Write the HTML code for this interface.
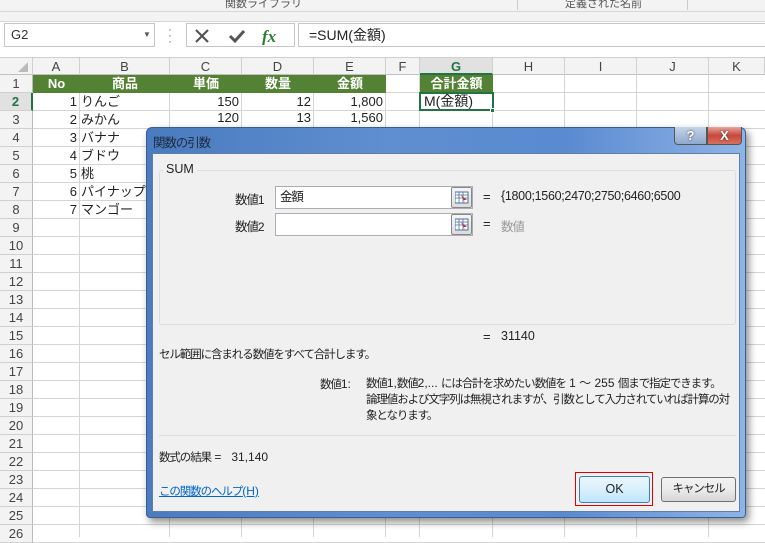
<!DOCTYPE html>
<html><head><meta charset="utf-8"><style>
*{margin:0;padding:0;box-sizing:border-box}
body{width:765px;height:537px;overflow:hidden;background:#fff;font-family:"Liberation Sans","Noto Sans CJK JP",sans-serif;font-size:13px;color:#222;position:relative}
.a{position:absolute;white-space:nowrap}
.gl{position:absolute;background:#d4d4d4}
.ch{position:absolute;top:58px;height:17px;text-align:center;font-size:13px;color:#444;line-height:17px;background:#f3f3f3;border-right:1px solid #d0d0d0;border-bottom:1px solid #c0c0c0}
.rh{position:absolute;left:0;width:33px;height:18px;text-align:center;font-size:13px;color:#444;line-height:18px;background:#f3f3f3;border-bottom:1px solid #d0d0d0;border-right:1px solid #bbb}
.hd{position:absolute;top:75px;height:18px;background:#548235;color:#fff;font-weight:bold;text-align:center;line-height:18px;font-size:13px}
.c{position:absolute;height:18px;line-height:18px;font-size:13px}
.r{text-align:right}
.ib{position:absolute;background:#fff;border:1px solid #abadb3}
.rb{position:absolute;width:21px;height:21px;border:1px solid #888;border-radius:2px;background:linear-gradient(#f6f6f6,#dcdcdc)}
.n{font-size:11.5px;letter-spacing:-1.1px}
.n b{font-weight:normal;letter-spacing:0;font-size:12px}
</style></head><body>
<div class="a" style="left:0;top:0;width:765px;height:12px;background:#f3f3f3;border-bottom:1px solid #d6d6d6"></div>
<div class="a" style="left:225px;top:-5px;font-size:11px;color:#555">関数ライブラリ</div>
<div class="a" style="left:517px;top:0;width:1px;height:10px;background:#ccc"></div>
<div class="a" style="left:687px;top:0;width:1px;height:10px;background:#ccc"></div>
<div class="a" style="left:565px;top:-5px;font-size:11px;color:#555">定義された名前</div>
<div class="a" style="left:0;top:13px;width:765px;height:45px;background:#fff;border-bottom:1px solid #d0d0d0"></div>
<div class="a" style="left:0;top:12px;width:765px;height:10px;background:#f3f3f3;border-bottom:1px solid #d6d6d6"></div>
<div class="a" style="left:4px;top:23px;width:151px;height:24px;border:1px solid #c6c6c6;background:#fff;padding-left:6px;line-height:22px;font-size:13px;color:#333">G2<span style="position:absolute;left:138px;top:0;font-size:8px;color:#555">▼</span></div>
<div class="a" style="left:168px;top:26px;font-size:12px;color:#777;line-height:6px">·<br>·<br>·</div>
<div class="a" style="left:186px;top:23px;width:109px;height:24px;border:1px solid #c6c6c6;background:#fff"></div>
<svg class="a" style="left:192px;top:27px" width="100" height="18"><path d="M4 3L16 15M16 3L4 15" stroke="#555" stroke-width="2.2"/><path d="M38 9l5 5 9-10" stroke="#555" stroke-width="3" fill="none"/><text x="70" y="15" font-family="Liberation Serif,serif" font-style="italic" font-weight="bold" font-size="17" fill="#2e7d32">fx</text></svg>
<div class="a" style="left:298px;top:23px;width:467px;height:24px;border:1px solid #c6c6c6;border-right:none;background:#fff;padding-left:10px;line-height:22px;font-size:14px">=SUM(金額)</div>
<div class="ch" style="left:0;width:33px"><svg width="33" height="17"><path d="M28 4L28 14L18 14Z" fill="#bbb"/></svg></div>
<div class="ch" style="left:33px;width:47px">A</div>
<div class="ch" style="left:80px;width:90px">B</div>
<div class="ch" style="left:170px;width:72px">C</div>
<div class="ch" style="left:242px;width:72px">D</div>
<div class="ch" style="left:314px;width:72px">E</div>
<div class="ch" style="left:386px;width:34px">F</div>
<div class="ch" style="left:420px;width:73px;background:#e1e1e1;color:#217346;font-weight:bold;border-bottom:2px solid #217346">G</div>
<div class="ch" style="left:493px;width:72px">H</div>
<div class="ch" style="left:565px;width:72px">I</div>
<div class="ch" style="left:637px;width:72px">J</div>
<div class="ch" style="left:709px;width:56px">K</div>
<div id="grid"></div>
<div class="gl" style="left:79px;top:75px;width:1px;height:462px"></div>
<div class="gl" style="left:169px;top:75px;width:1px;height:462px"></div>
<div class="gl" style="left:241px;top:75px;width:1px;height:462px"></div>
<div class="gl" style="left:313px;top:75px;width:1px;height:462px"></div>
<div class="gl" style="left:385px;top:75px;width:1px;height:462px"></div>
<div class="gl" style="left:419px;top:75px;width:1px;height:462px"></div>
<div class="gl" style="left:492px;top:75px;width:1px;height:462px"></div>
<div class="gl" style="left:564px;top:75px;width:1px;height:462px"></div>
<div class="gl" style="left:636px;top:75px;width:1px;height:462px"></div>
<div class="gl" style="left:708px;top:75px;width:1px;height:462px"></div>
<script>
var g='';for(var i=1;i<=26;i++){var t=75+(i-1)*18;g+='<div class="gl" style="left:33px;top:'+(t+17)+'px;width:732px;height:1px"></div><div class="rh" style="top:'+t+'px'+(i==2?';background:#e1e1e1;color:#217346;font-weight:bold;border-right:2px solid #217346':'')+'">'+i+'</div>';}
document.getElementById('grid').innerHTML=g;
</script>
<div class="hd" style="left:33px;width:47px">No</div>
<div class="hd" style="left:80px;width:90px">商品</div>
<div class="hd" style="left:170px;width:72px">単価</div>
<div class="hd" style="left:242px;width:72px">数量</div>
<div class="hd" style="left:314px;width:72px">金額</div>
<div class="hd" style="left:420px;width:73px">合計金額</div>
<div class="c r" style="left:33px;top:93px;width:44px">1</div><div class="c" style="left:81px;top:93px">りんご</div>
<div class="c r" style="left:170px;top:93px;width:69px">150</div><div class="c r" style="left:242px;top:93px;width:69px">12</div><div class="c r" style="left:314px;top:93px;width:69px">1,800</div>
<div class="c r" style="left:33px;top:111px;width:44px">2</div><div class="c" style="left:81px;top:111px">みかん</div>
<div class="c r" style="left:170px;top:109px;width:69px">120</div><div class="c r" style="left:242px;top:109px;width:69px">13</div><div class="c r" style="left:314px;top:109px;width:69px">1,560</div>
<div class="c r" style="left:33px;top:129px;width:44px">3</div><div class="c" style="left:81px;top:129px">バナナ</div>
<div class="c r" style="left:33px;top:147px;width:44px">4</div><div class="c" style="left:81px;top:147px">ブドウ</div>
<div class="c r" style="left:33px;top:165px;width:44px">5</div><div class="c" style="left:81px;top:165px">桃</div>
<div class="c r" style="left:33px;top:183px;width:44px">6</div><div class="c" style="left:81px;top:183px">パイナップル</div>
<div class="c r" style="left:33px;top:201px;width:44px">7</div><div class="c" style="left:81px;top:201px">マンゴー</div>
<div class="a" style="left:419px;top:92px;width:75px;height:19px;border:2px solid #217346;background:#fff;padding-left:3px;line-height:15px;font-size:14px">M(金額)</div>
<div class="a" style="left:490px;top:108px;width:5px;height:5px;background:#217346;border:1px solid #fff"></div>
<!-- dialog -->
<div class="a" style="left:146px;top:127px;width:600px;height:391px;border:1px solid #3a5f8f;border-radius:6px 6px 4px 4px;background:linear-gradient(90deg,#4a7bbf 0%,#5f8fd0 40%,#5a8ad0 70%,#8fb4e6 100%);box-shadow:3px 4px 8px rgba(0,0,0,.45)"></div>
<div class="a n" style="left:153px;top:132px;font-size:12.5px;color:#1c2a3c">関数の引数</div>
<div class="a" style="left:674px;top:127px;width:33px;height:18px;border:1px solid #555;border-top:none;border-radius:0 0 0 4px;background:linear-gradient(#c4d4ea,#8fa8cc);text-align:center;color:#fff;font-weight:bold;font-size:13px;line-height:17px;text-shadow:0 0 2px #333">?</div>
<div class="a" style="left:707px;top:127px;width:35px;height:18px;border:1px solid #555;border-top:none;border-radius:0 0 4px 0;background:linear-gradient(#e8a59b,#c9463a 50%,#d8705f);text-align:center;color:#fff;font-weight:bold;font-size:13px;line-height:17px;text-shadow:0 0 2px #333">X</div>
<div class="a" style="left:152px;top:153px;width:588px;height:359px;background:#f0f0f0;border:1px solid #5f7fa8"></div>
<div class="a" style="left:159px;top:170px;width:577px;height:155px;border:1px solid #d5dfe5;border-radius:3px"></div>
<div class="a" style="left:163px;top:162px;background:#f0f0f0;padding:0 3px;font-size:12.5px">SUM</div>
<div class="a n" style="left:235px;top:189px;font-size:12.5px">数値<b>1</b></div>
<div class="ib n" style="left:275px;top:186px;width:198px;height:23px;padding-left:4px;line-height:21px;font-size:12.5px">金額</div>
<div class="rb" style="left:451px;top:187px"></div>
<div class="a" style="left:483px;top:189px">=</div>
<div class="a" style="left:501px;top:189px;width:199px;overflow:hidden;font-size:12.5px;letter-spacing:-0.3px">{1800;1560;2470;2750;6460;6500</div>
<div class="a n" style="left:235px;top:216px;font-size:12.5px">数値<b>2</b></div>
<div class="ib" style="left:275px;top:213px;width:198px;height:23px"></div>
<div class="rb" style="left:451px;top:214px"></div>
<div class="a" style="left:483px;top:216px">=</div>
<div class="a n" style="left:501px;top:216px;color:#999;font-size:12.5px">数値</div>
<svg class="a" style="left:455px;top:191px" width="14" height="14"><rect x="0" y="1" width="13" height="11" fill="#fff" stroke="#4a6fa5"/><path d="M0 4H13M0 7H13M4 1V12M8 1V12" stroke="#4a6fa5" stroke-width=".8"/><path d="M6 4l6 5-3 0 1 3z" fill="#c0392b"/></svg>
<svg class="a" style="left:455px;top:218px" width="14" height="14"><rect x="0" y="1" width="13" height="11" fill="#fff" stroke="#4a6fa5"/><path d="M0 4H13M0 7H13M4 1V12M8 1V12" stroke="#4a6fa5" stroke-width=".8"/><path d="M6 4l6 5-3 0 1 3z" fill="#c0392b"/></svg>
<div class="a" style="left:483px;top:329px">=</div>
<div class="a" style="left:501px;top:329px;font-size:12.5px">31140</div>
<div class="a n" style="left:159px;top:346px">セル範囲に含まれる数値をすべて合計します。</div>
<div class="a n" style="left:320px;top:376px">数値<b>1:</b></div>
<div class="a n" style="left:366px;top:375px;line-height:16px">数値<b>1,</b>数値<b>2,... </b>には合計を求めたい数値を<b> 1 ～ 255 </b>個まで指定できます。<br>論理値および文字列は無視されますが、引数として入力されていれば計算の対<br>象となります。</div>
<div class="a" style="left:159px;top:435px;width:577px;height:1px;background:#d5dfe5"></div>
<div class="a n" style="left:159px;top:449px">数式の結果<b> =&nbsp;&nbsp; 31,140</b></div>
<div class="a n" style="left:159px;top:483px;color:#0066cc;text-decoration:underline">この関数のヘルプ<b>(H)</b></div>
<div class="a" style="left:575px;top:472px;width:78px;height:34px;border:1px solid #e00000"></div>
<div class="a" style="left:579px;top:476px;width:71px;height:27px;border:1px solid #3c7fb1;border-radius:3px;background:linear-gradient(#eaf6fd,#d9f0fc 50%,#bee6fd);text-align:center;line-height:25px;font-size:12.5px">OK</div>
<div class="a n" style="left:661px;top:477px;width:75px;height:25px;border:1px solid #707070;border-radius:3px;background:linear-gradient(#f2f2f2,#ebebeb 50%,#d6d6d6);text-align:center;line-height:23px">キャンセル</div>
</body></html>
